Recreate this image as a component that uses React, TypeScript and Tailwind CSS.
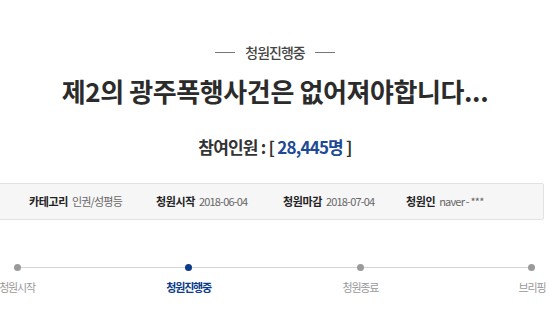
import React from 'react';

const steps = [
  { label: '청원시작', active: false },
  { label: '청원진행중', active: true },
  { label: '청원종료', active: false },
  { label: '브리핑', active: false },
];

const meta = [
  { label: '카테고리', value: '인권/성평등', width: 'w-[127px]' },
  { label: '청원시작', value: '2018-06-04', width: 'w-[127px]' },
  { label: '청원마감', value: '2018-07-04', width: 'w-[123px]' },
  { label: '청원인', value: 'naver - ***', width: 'flex-1' },
];

const App: React.FC = () => {
  return (
    <div
      className="w-[550px] h-[336px] bg-white overflow-hidden text-[#333]"
      style={{ fontFamily: '"Noto Sans CJK KR", "Noto Sans", sans-serif' }}
    >
      {/* Status */}
      <div className="pt-[42px] flex justify-center h-[62px]">
        <div className="flex items-center gap-[10px] h-[20px]">
          <span className="w-[20px] h-px bg-[#777]" />
          <span className="text-[14px] leading-[20px] font-medium tracking-[-1px] text-[#444]">청원진행중</span>
          <span className="w-[20px] h-px bg-[#777]" />
        </div>
      </div>

      {/* Title */}
      <h1 className="mt-[12px] text-center text-[26px] leading-[34px] font-bold tracking-[-0.4px] text-[#2b2b2b]">
        제2의 광주폭행사건은 없어져야합니다...
      </h1>

      {/* Participants */}
      <p className="mt-[27px] text-center text-[17px] leading-[24px] font-bold tracking-[-0.8px] text-[#333]">
        참여인원 : [ <span className="text-[#1d4a96]">28,445명</span> ]
      </p>

      {/* Meta box */}
      <div className="mt-[24px] ml-[-2px] mr-[6px] h-[37px] bg-[#f6f6f6] border border-[#e2e2e2] rounded-[2px] flex items-center pl-[30px]">
        {meta.map(m => (
          <div key={m.label} className={`${m.width} flex items-center gap-[4px] whitespace-nowrap`}>
            <span className="text-[11px] font-bold tracking-[-0.4px] text-[#222]">{m.label}</span>
            <span className="text-[11px] tracking-[-0.8px] text-[#666]">{m.value}</span>
          </div>
        ))}
      </div>

      {/* Progress */}
      <div className="relative mt-[44px] ml-[-3px] mr-[-2px]">
        <div className="absolute left-[20px] right-[20px] top-[3px] h-px bg-[#d4d4d4]" />
        <div className="relative flex justify-between">
          {steps.map(s => (
            <div key={s.label} className="w-[40px] flex flex-col items-center">
              <span className={`w-[7px] h-[7px] rounded-full ${s.active ? 'bg-[#0b3a8a]' : 'bg-[#9a9a9a]'}`} />
              <span
                className={`mt-[8px] whitespace-nowrap text-[11px] leading-[16px] tracking-[-1.2px] ${
                  s.active ? 'font-bold text-[#0b3a8a]' : 'text-[#999]'
                }`}
              >
                {s.label}
              </span>
            </div>
          ))}
        </div>
      </div>
    </div>
  );
};

export default App;
